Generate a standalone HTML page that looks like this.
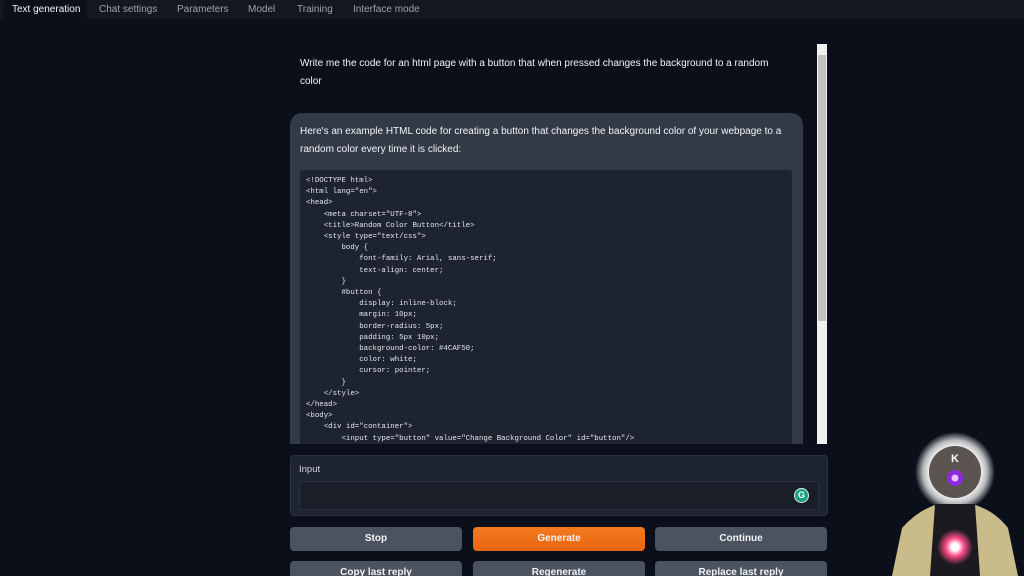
<!DOCTYPE html>
<html><head><style>
*{margin:0;padding:0;box-sizing:border-box}
html,body{width:1024px;height:576px;overflow:hidden}
body{background:#0b0f19;font-family:"Liberation Sans",sans-serif;position:relative;color:#e5e7eb}
.tabs{position:absolute;top:0;left:0;width:1024px;height:19px;background:#14171f}
.tab{position:absolute;top:4px;font-size:10px;color:#9ca3af}
.tab.a{top:0;left:3px;width:84px;height:19px;background:#0b0f19;color:#f3f4f6;padding:4px 0 0 9px;border-radius:4px 4px 0 0}
.chat{position:absolute;left:290px;top:44px;width:527px;height:400px;overflow:hidden}
.user{position:absolute;left:10px;top:11px;width:480px;font-size:10px;line-height:18px;color:#f3f4f6}
.bot{position:absolute;left:0;top:69px;width:513px;height:400px;background:#333a47;border-radius:12px}
.bot p{position:absolute;left:10px;top:10px;width:495px;font-size:10px;line-height:18px;color:#f3f4f6}
.code{position:absolute;left:10px;top:57px;width:492px;height:400px;background:#1e2330;border-radius:3px}
pre{position:absolute;left:6px;top:6px;font-family:"Liberation Mono",monospace;font-size:7.4px;line-height:11.2px;color:#e5e7eb}
.sb{position:absolute;left:817px;top:44px;width:10px;height:400px;background:#f0f0f0}
.th{position:absolute;left:1px;top:11px;width:8px;height:266px;background:#c1c1c1}
.inp{position:absolute;left:290px;top:455px;width:538px;height:61px;background:#1f2431;border:1px solid #2b3140;border-radius:4px}
.inp span{position:absolute;left:8px;top:8px;font-size:9.5px;color:#d1d5db}
.box{position:absolute;left:8px;top:25px;width:520px;height:29px;background:#1a1e29;border:1px solid #2b3140;border-radius:4px}
.g{position:absolute;right:9px;top:6px;width:15px;height:15px;border-radius:50%;background:#15a37f;border:1.5px solid #e5e7eb;color:#fff;font-size:9px;font-weight:bold;text-align:center;line-height:12px}
.btn{position:absolute;width:172px;height:24px;border-radius:4px;background:#4b5260;color:#f3f4f6;font-size:10px;font-weight:bold;text-align:center;line-height:24px}
.or{background:linear-gradient(#f47a22,#e8640e)}
</style></head><body>
<div class="tabs">
<div class="tab a">Text generation</div>
<div class="tab" style="left:99px">Chat settings</div>
<div class="tab" style="left:177px">Parameters</div>
<div class="tab" style="left:248px">Model</div>
<div class="tab" style="left:297px">Training</div>
<div class="tab" style="left:353px">Interface mode</div>
</div>
<div class="chat">
<div class="user">Write me the code for an html page with a button that when pressed changes the background to a random color</div>
<div class="bot"><p>Here's an example HTML code for creating a button that changes the background color of your webpage to a random color every time it is clicked:</p>
<div class="code"><pre>&lt;!DOCTYPE html&gt;
&lt;html lang="en"&gt;
&lt;head&gt;
    &lt;meta charset="UTF-8"&gt;
    &lt;title&gt;Random Color Button&lt;/title&gt;
    &lt;style type="text/css"&gt;
        body {
            font-family: Arial, sans-serif;
            text-align: center;
        }
        #button {
            display: inline-block;
            margin: 10px;
            border-radius: 5px;
            padding: 5px 10px;
            background-color: #4CAF50;
            color: white;
            cursor: pointer;
        }
    &lt;/style&gt;
&lt;/head&gt;
&lt;body&gt;
    &lt;div id="container"&gt;
        &lt;input type="button" value="Change Background Color" id="button"/&gt;</pre></div></div>
</div>
<div class="sb"><div class="th"></div></div>
<div class="inp"><span>Input</span><div class="box"><div class="g">G</div></div></div>
<div class="btn" style="left:290px;top:527px">Stop</div>
<div class="btn or" style="left:473px;top:527px">Generate</div>
<div class="btn" style="left:655px;top:527px">Continue</div>
<div class="btn" style="left:290px;top:561px">Copy last reply</div>
<div class="btn" style="left:473px;top:561px">Regenerate</div>
<div class="btn" style="left:655px;top:561px">Replace last reply</div>
<svg style="position:absolute;left:880px;top:420px" width="144" height="156">
<defs><radialGradient id="h"><stop offset="0.6" stop-color="#fff"/><stop offset="0.8" stop-color="#fff" stop-opacity=".7"/><stop offset="1" stop-color="#fff" stop-opacity="0"/></radialGradient>
<radialGradient id="c"><stop offset="0.2" stop-color="#fff"/><stop offset="0.5" stop-color="#ff4d8a"/><stop offset="1" stop-color="#ff4d8a" stop-opacity="0"/></radialGradient></defs>
<circle cx="75" cy="52" r="40" fill="url(#h)"/>
<path d="M12 156 L22 108 Q38 90 58 84 L92 84 Q114 90 128 108 L138 156Z" fill="#c9bc8a"/>
<path d="M55 84 L95 84 L100 156 L50 156Z" fill="#1a1a1f"/>
<circle cx="75" cy="127" r="18" fill="url(#c)"/>
<circle cx="75" cy="52" r="26" fill="#5a5350"/>
<text x="75" y="42" font-size="11" font-weight="bold" fill="#fff" text-anchor="middle" font-family="Liberation Sans">K</text>
<circle cx="75" cy="58" r="8" fill="#8a2be2"/><circle cx="75" cy="58" r="3.5" fill="#f0c0ff"/>
</svg>
</body></html>
